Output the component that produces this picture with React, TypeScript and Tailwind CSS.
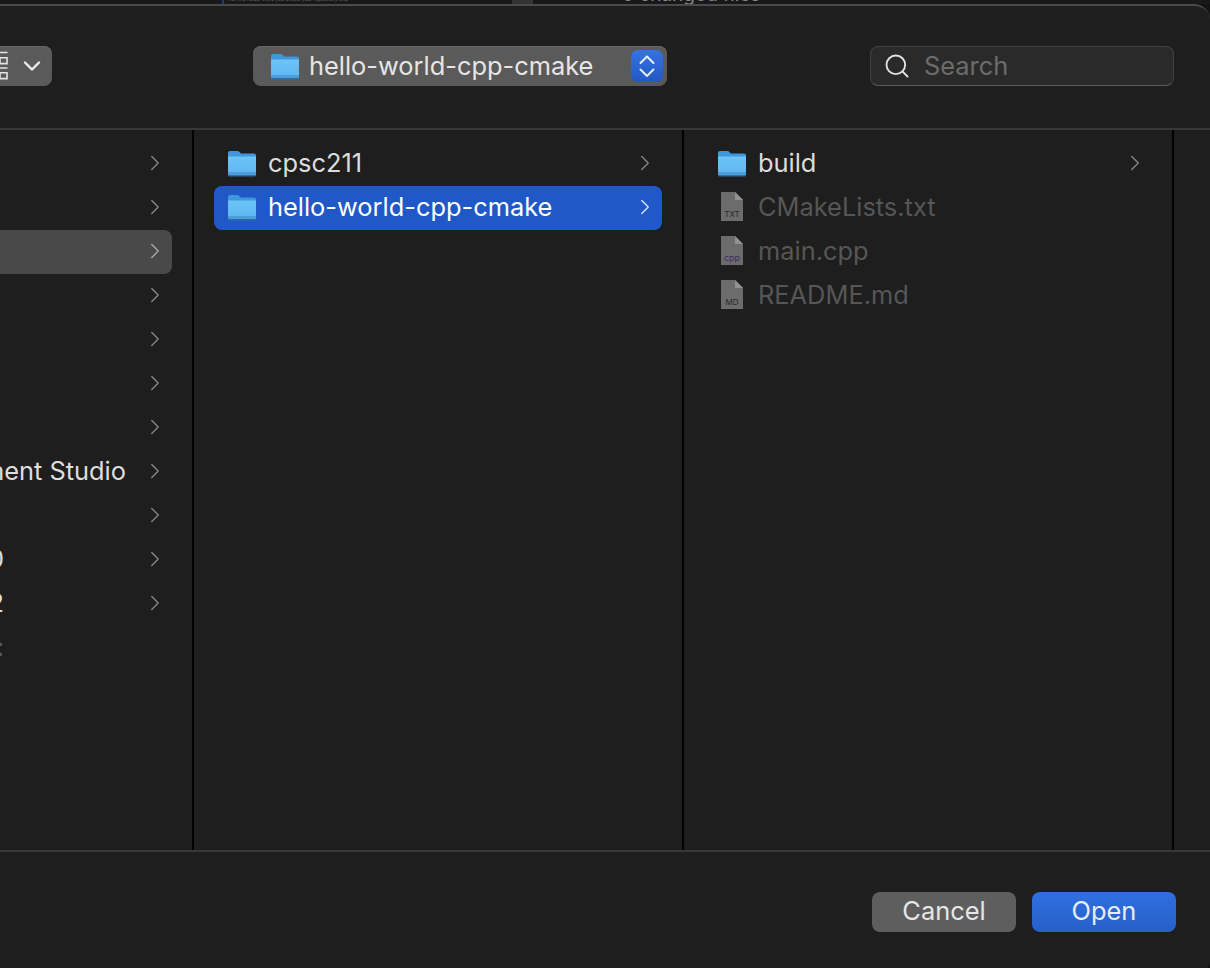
import { ChevronDown, ChevronRight, Search } from "lucide-react"

const font = "font-['Inter','Liberation_Sans',sans-serif]"

function FolderIcon() {
  return (
    <svg width="30" height="28" viewBox="0 0 30 28" className="shrink-0">
      <defs>
        <linearGradient id="folderFront" x1="0" y1="0" x2="0" y2="1">
          <stop offset="0" stopColor="#6cc4f8" />
          <stop offset="0.78" stopColor="#62b8f2" />
          <stop offset="0.8" stopColor="#4d9fdc" />
          <stop offset="1" stopColor="#4a9bd8" />
        </linearGradient>
      </defs>
      <path
        d="M1 4c0-1.2.8-2 2-2h7.5c.8 0 1.3.3 1.9.9L14 4.5h13c1.2 0 2 .8 2 2V10H1z"
        fill="#3f98dc"
      />
      <path
        d="M1 7.5h28V25c0 1-.7 1.7-1.7 1.7H2.7C1.7 26.7 1 26 1 25z"
        fill="url(#folderFront)"
      />
      <path d="M1 26h28v.6c0 .5-.7.9-1.7.9H2.7C1.7 27.5 1 27.1 1 26.6z" fill="#2b6fa6" />
    </svg>
  )
}

function FileIcon({ label, labelClass }: { label: string; labelClass: string }) {
  return (
    <span className="relative mb-[2px] flex h-[29px] w-[22px] shrink-0 items-end justify-center">
      <svg width="22" height="29" viewBox="0 0 22 29" className="absolute inset-0">
        <path d="M0 0h14l8 8v21H0z" fill="#6c6c6c" />
        <path d="M14 0l8 8h-8z" fill="#929292" />
      </svg>
      <span className={`relative mb-[2px] leading-[10px] ${labelClass}`}>{label}</span>
    </span>
  )
}

// the sidebar column starts off-screen, so its labels are right-aligned and get cut at the left edge
function SidebarRow({
  text,
  selected,
  textClass = "text-[#dedede]",
}: {
  text?: string
  selected?: boolean
  textClass?: string
}) {
  return (
    <div
      className={`flex h-11 w-[172px] items-center justify-end overflow-hidden rounded-r-lg pb-[2px] ${
        selected ? "bg-[#494949]" : ""
      }`}
    >
      {text ? <span className={`shrink-0 whitespace-nowrap text-[25.4px] ${textClass}`}>{text}</span> : null}
      <ChevronRight
        className={`mr-[4px] shrink-0 ${selected ? "text-[#a8a8a8]" : "text-[#858585]"}`}
        size={26}
        strokeWidth={1.25}
      />
    </div>
  )
}

function FolderRow({ name, selected }: { name: string; selected?: boolean }) {
  return (
    <div
      className={`flex h-11 w-[448px] items-center rounded-lg pb-[2px] pl-[13px] pr-[4px] ${
        selected ? "bg-[#2058c8] text-white" : "text-[#dcdcdc]"
      }`}
    >
      <FolderIcon />
      <span className="ml-[11px] flex-1 text-[25.4px] leading-none">{name}</span>
      <ChevronRight className={selected ? "text-[#dbe5fa]" : "text-[#858585]"} size={26} strokeWidth={1.25} />
    </div>
  )
}

function FileRow({ name, label, labelClass }: { name: string; label: string; labelClass: string }) {
  return (
    <div className="flex h-11 w-[448px] items-center pb-[2px] pl-[17px] text-[#565656]">
      <FileIcon label={label} labelClass={labelClass} />
      <span className="ml-[15px] text-[25.4px] leading-none">{name}</span>
    </div>
  )
}

export default function App() {
  return (
    <div className={`h-[968px] w-[1210px] overflow-hidden bg-[#141414] ${font}`}>
      {/* strip of the window behind the dialog */}
      <div className="flex h-[4px] overflow-hidden bg-[#18181a]">
        <span className="ml-[222px] h-[4px] w-[2px] shrink-0 bg-[#1c3f70]" />
        <span className="ml-[5px] mt-[-4px] w-[148px] shrink-0 whitespace-nowrap text-[5px] leading-[6px] text-[#666]">
          run the folder were you create your repository and
        </span>
        <span className="ml-[135px] h-[4px] w-[21px] shrink-0 bg-[#333]" />
        <span className="ml-[89px] mt-[-14px] shrink-0 whitespace-nowrap text-[19px] leading-[18px] text-[#888]">
          0 changed files
        </span>
      </div>

      <div className="flex h-[964px] flex-col rounded-tr-[16px] rounded-br-[5px] border-t-2 border-[#4a4a4a] bg-[#1e1e1e]">
        {/* toolbar */}
        <div className="flex h-[124px] shrink-0 items-start border-b-2 border-[#383838] pt-[40px]">
          <div className="flex h-10 w-[52px] items-center justify-end overflow-hidden rounded-r-lg bg-[#5a5a5a] pr-[6px] shadow-[inset_0_1px_0_#666]">
            <svg
              width="9"
              height="30"
              viewBox="0 0 9 30"
              className="mr-[10px] shrink-0 text-[#e4e4e4]"
              fill="none"
              stroke="currentColor"
              strokeWidth="1.6"
            >
              <path d="M0 1.5h8.5M1 6.8h7v5.8H1zM0 17h8.5M1 21.8h7v5.8H1z" />
            </svg>
            <ChevronDown className="shrink-0 text-[#ececec]" size={28} strokeWidth={2.1} />
          </div>

          <div className="ml-[201px] flex h-10 w-[414px] items-center rounded-lg bg-[#5a5a5a] pl-[17px] pr-[4px] shadow-[inset_0_1px_0_#666]">
            <FolderIcon />
            <span className="ml-[9px] flex-1 text-[25.4px] leading-none text-[#e6e6e6]">hello-world-cpp-cmake</span>
            <span className="flex h-8 w-8 items-center justify-center rounded-[7px] bg-gradient-to-b from-[#3474e2] to-[#2358c4] text-[#e6edfb]">
              <svg
                width="16"
                height="26"
                viewBox="0 0 16 26"
                fill="none"
                stroke="currentColor"
                strokeWidth="2"
                strokeLinecap="round"
                strokeLinejoin="round"
              >
                <path d="M1.5 10L8 3.5l6.5 6.5M1.5 16.5L8 23l6.5-6.5" />
              </svg>
            </span>
          </div>

          <div className="ml-[203px] flex h-10 w-[304px] items-center rounded-lg border border-[#414141] border-b-[#5a5a5a] bg-[#2a2a2a] pl-[12px]">
            <Search className="shrink-0 text-[#e2e2e2]" size={28} strokeWidth={1.6} />
            <span className="ml-[13px] text-[25.4px] leading-none text-[#6c6c6c]">Search</span>
          </div>
        </div>

        {/* columns */}
        <div className="flex h-[722px] shrink-0 border-b-2 border-[#383838] text-[#dcdcdc]">
          <div className="w-[194px] border-r-2 border-black pt-[12px]">
            <SidebarRow />
            <SidebarRow />
            <SidebarRow selected />
            <SidebarRow />
            <SidebarRow />
            <SidebarRow />
            <SidebarRow />
            <SidebarRow text="Development Studio" textClass="text-[#dedede] mr-[16px]" />
            <SidebarRow text="'" textClass="text-[#5a5a5a] mr-[140px]" />
            <SidebarRow text="0" textClass="text-[#dedede] mr-[138px]" />
            <SidebarRow text="2" textClass="text-[#dedede] mr-[138px]" />
            <div className="flex h-11 w-[172px] items-center justify-end overflow-hidden pb-[2px]">
              <span className="mr-[168px] shrink-0 whitespace-nowrap text-[25.4px] text-[#5a5a5a]">:</span>
            </div>
          </div>

          <div className="w-[490px] border-r-2 border-black pl-[20px] pt-[12px]">
            <FolderRow name="cpsc211" />
            <FolderRow name="hello-world-cpp-cmake" selected />
          </div>

          <div className="w-[490px] border-r-2 border-black pl-[20px] pt-[12px]">
            <FolderRow name="build" />
            <FileRow name="CMakeLists.txt" label="TXT" labelClass="text-[8px] text-[#2a2a2a]" />
            <FileRow name="main.cpp" label="cpp" labelClass="text-[9px] text-[#3d2f66]" />
            <FileRow name="README.md" label="MD" labelClass="text-[8px] text-[#2a2a2a]" />
          </div>
        </div>

        {/* footer */}
        <div className="flex flex-1 items-start justify-end gap-4 pr-[34px] pt-[40px]">
          <button className="h-10 w-[144px] rounded-lg bg-[#5e5e5e] pb-[2px] text-[25.4px] leading-none text-[#e6e6e6]">
            Cancel
          </button>
          <button className="h-10 w-[144px] rounded-lg bg-gradient-to-b from-[#2f6fe0] to-[#2860c8] pb-[2px] text-[25.4px] leading-none text-[#e6edfb]">
            Open
          </button>
        </div>
      </div>
    </div>
  )
}
